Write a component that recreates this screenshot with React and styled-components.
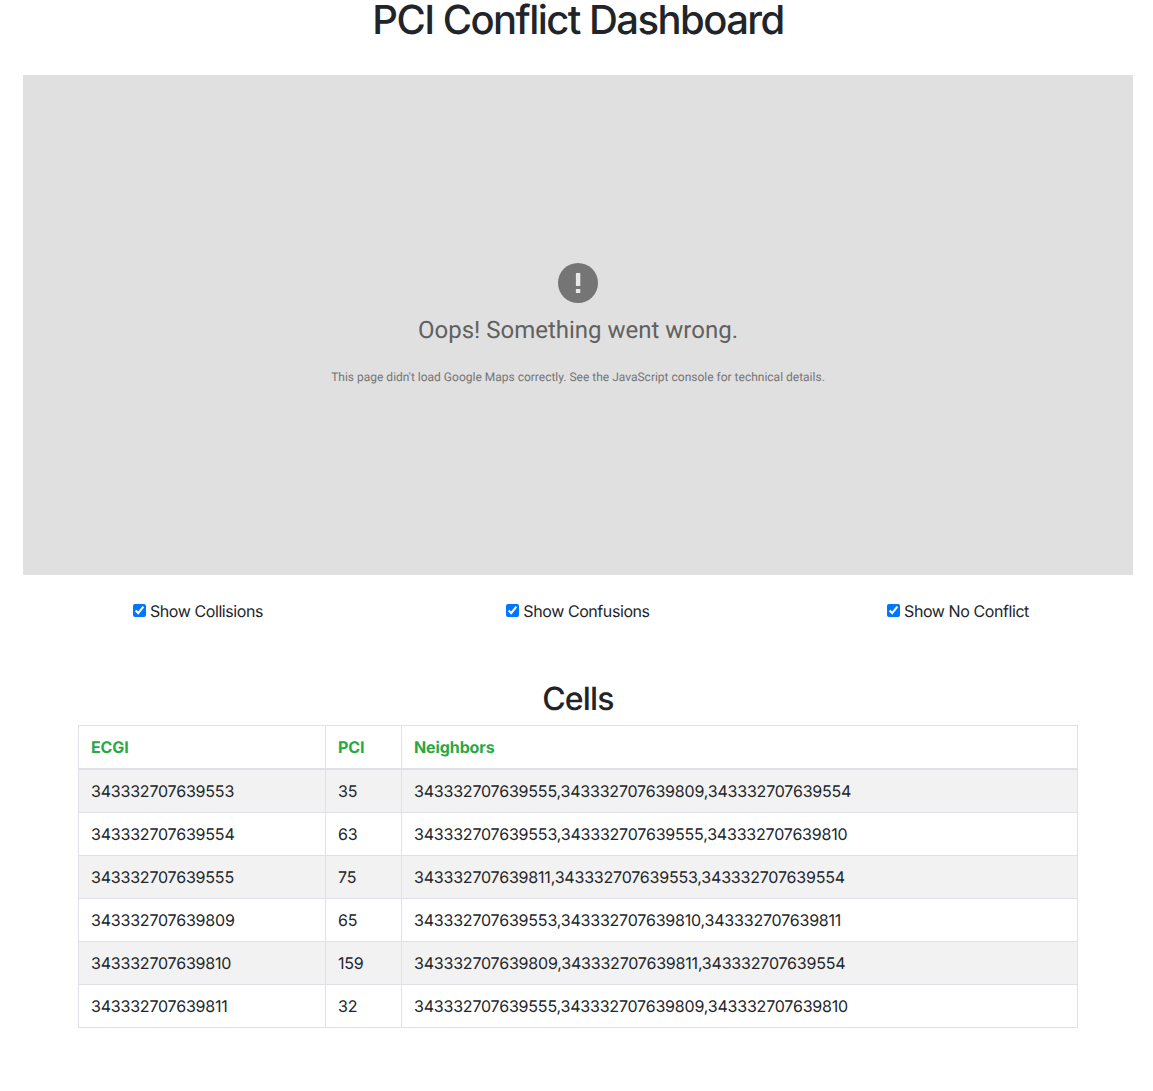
import React from "react";
import styled, { createGlobalStyle } from "styled-components";

const GlobalStyle = createGlobalStyle`
  html, body {
    margin: 0;
    padding: 0;
    background: #ffffff;
  }
  body {
    font-family: Inter, "Liberation Sans", sans-serif;
    font-size: 16px;
    line-height: 1.5;
    color: #212529;
    text-rendering: geometricPrecision;
  }
`;

const Page = styled.div`
  width: 1140px;
  height: 1091px;
  margin-left: 8px;
  overflow: hidden;
`;

const Title = styled.h1`
  margin: 0 0 35px;
  font-size: 40px;
  font-weight: 500;
  line-height: 40px;
  letter-spacing: -1.55px;
  text-align: center;
`;

const MapBox = styled.div`
  margin: 0 15px;
  height: 500px;
  background: #e0e0e0;
  display: flex;
  flex-direction: column;
  align-items: center;
  font-family: Roboto, sans-serif;
  padding-top: 188px;
  box-sizing: border-box;
`;

const ErrorIcon = styled.svg`
  display: block;
  width: 40px;
  height: 40px;
`;

const MapHeading = styled.div`
  margin-top: 12px;
  font-size: 24px;
  line-height: 30px;
  color: #616161;
`;

const MapMessage = styled.div`
  margin-top: 23px;
  font-size: 12px;
  line-height: 18px;
  color: #757575;
`;

const Filters = styled.div`
  display: grid;
  grid-template-columns: repeat(3, 1fr);
  margin-top: 24px;
`;

const Filter = styled.label`
  display: flex;
  justify-content: center;
  align-items: center;
  gap: 4px;
  height: 24px;
  font-size: 16px;
  letter-spacing: -0.42px;
`;

const Check = styled.input`
  width: 13px;
  height: 13px;
  margin: 0 0 2px;
  accent-color: #0075ff;
`;

const SectionTitle = styled.h2`
  margin: 57px 0 7px;
  font-size: 32px;
  font-weight: 500;
  line-height: 38px;
  letter-spacing: -0.8px;
  text-align: center;
`;

const Table = styled.table`
  width: 1000px;
  margin: 0 auto;
  border-collapse: collapse;
  table-layout: fixed;
`;

const HeadCell = styled.th`
  height: 43px;
  padding: 0 12px;
  box-sizing: border-box;
  border: 1px solid #dee2e6;
  border-bottom-width: 2px;
  color: #28a745;
  font-weight: 700;
  letter-spacing: -0.1px;
  text-align: left;
  width: ${(props) => props.width || "auto"};
`;

const Row = styled.tr`
  background: ${(props) => (props.$striped ? "#f2f2f2" : "#ffffff")};
  &:first-child td {
    height: 44px;
  }
`;

const Cell = styled.td`
  height: 43px;
  padding: 0 12px;
  box-sizing: border-box;
  border: 1px solid #dee2e6;
  letter-spacing: -0.2px;
`;

const cells = [
  ["343332707639553", "35", "343332707639555,343332707639809,343332707639554"],
  ["343332707639554", "63", "343332707639553,343332707639555,343332707639810"],
  ["343332707639555", "75", "343332707639811,343332707639553,343332707639554"],
  ["343332707639809", "65", "343332707639553,343332707639810,343332707639811"],
  ["343332707639810", "159", "343332707639809,343332707639811,343332707639554"],
  ["343332707639811", "32", "343332707639555,343332707639809,343332707639810"],
];

const filters = ["Show Collisions", "Show Confusions", "Show No Conflict"];

export default function App() {
  return (
    <>
      <GlobalStyle />
      <Page>
        <Title>PCI Conflict Dashboard</Title>
        <MapBox>
          <ErrorIcon viewBox="0 0 40 40">
            <circle cx="20" cy="20" r="20" fill="#757575" />
            <rect x="17.9" y="10" width="4.4" height="13" fill="#e8e8e8" />
            <rect x="17.9" y="26" width="4.4" height="4" fill="#e8e8e8" />
          </ErrorIcon>
          <MapHeading>Oops! Something went wrong.</MapHeading>
          <MapMessage>
            This page didn't load Google Maps correctly. See the JavaScript
            console for technical details.
          </MapMessage>
        </MapBox>
        <Filters>
          {filters.map((label) => (
            <Filter key={label}>
              <Check type="checkbox" defaultChecked />
              {label}
            </Filter>
          ))}
        </Filters>
        <SectionTitle>Cells</SectionTitle>
        <Table>
          <thead>
            <tr>
              <HeadCell width="247px">ECGI</HeadCell>
              <HeadCell width="76px">PCI</HeadCell>
              <HeadCell>Neighbors</HeadCell>
            </tr>
          </thead>
          <tbody>
            {cells.map((row, i) => (
              <Row key={row[0]} $striped={i % 2 === 0}>
                {row.map((value, j) => (
                  <Cell key={j}>{value}</Cell>
                ))}
              </Row>
            ))}
          </tbody>
        </Table>
      </Page>
    </>
  );
}
